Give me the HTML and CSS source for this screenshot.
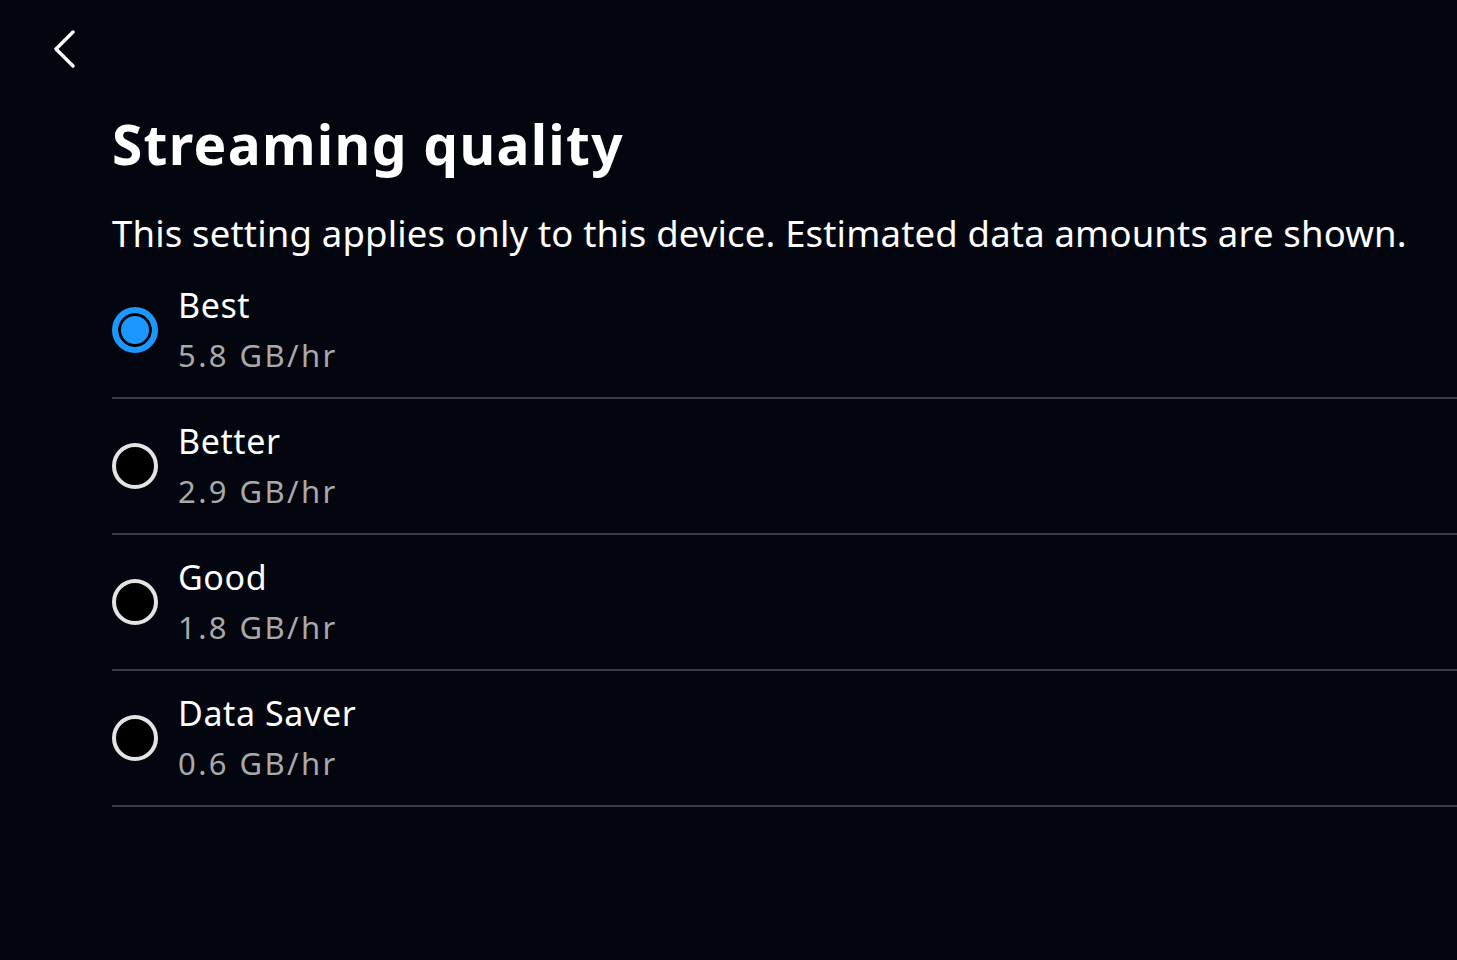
FILE: index.html
```html
<!DOCTYPE html>
<html lang="en">
<head>
<meta charset="utf-8">
<title>Streaming quality</title>
<link rel="stylesheet" href="styles.css">
</head>
<body>
<div class="page">
  <button class="back" aria-label="Back">
    <svg width="40" height="40" viewBox="0 0 40 40"><path d="M33 4 L16 21 L33 38" fill="none" stroke="#fff" stroke-width="3.4" stroke-linecap="round" stroke-linejoin="round"/></svg>
  </button>
  <main class="content">
    <h1 class="title">Streaming quality</h1>
    <p class="desc">This setting applies only to this device. Estimated data amounts are shown.</p>
    <ul class="options">
      <li class="option">
        <span class="radio selected"></span>
        <div class="text"><div class="label">Best</div><div class="sub">5.8 GB/hr</div></div>
      </li>
      <li class="option">
        <span class="radio"></span>
        <div class="text"><div class="label">Better</div><div class="sub">2.9 GB/hr</div></div>
      </li>
      <li class="option">
        <span class="radio"></span>
        <div class="text"><div class="label">Good</div><div class="sub">1.8 GB/hr</div></div>
      </li>
      <li class="option">
        <span class="radio"></span>
        <div class="text"><div class="label">Data Saver</div><div class="sub">0.6 GB/hr</div></div>
      </li>
    </ul>
  </main>
</div>
</body>
</html>
```

FILE: styles.css
```css
html, body {
  margin: 0;
  padding: 0;
  background: #03060f;
  color: #fff;
  font-family: "Noto Sans", "Open Sans", sans-serif;
}
.page {
  width: 1457px;
  height: 960px;
  overflow: hidden;
}
.back {
  display: block;
  margin: 28px 0 0 40px;
  padding: 0;
  width: 40px;
  height: 40px;
  background: none;
  border: 0;
}
.back svg { display: block; }
.content {
  padding-left: 112px;
}
.title {
  margin: 43px 0 0 0;
  font-size: 55px;
  line-height: 66px;
  font-weight: 700;
  letter-spacing: 1.3px;
}
.desc {
  margin: 31px 0 0 0;
  font-size: 36.5px;
  line-height: 50px;
  letter-spacing: 0.17px;
}
.options {
  list-style: none;
  margin: 5px 0 0 0;
  padding: 0;
}
.option {
  display: flex;
  align-items: center;
  height: 134px;
  border-bottom: 2px solid #3a3d45;
}
.radio {
  flex: none;
  box-sizing: border-box;
  width: 46px;
  height: 46px;
  border-radius: 50%;
  border: 4px solid #e4e4e4;
  background: #000;
  margin-right: 20px;
}
.radio.selected {
  border: 6px solid #1a98ff;
  background: #1a98ff;
  box-shadow: inset 0 0 0 3px #000;
}
.label {
  font-size: 34px;
  line-height: 50px;
  letter-spacing: 0.6px;
}
.sub {
  font-size: 31px;
  line-height: 50px;
  color: #a9a9a9;
  letter-spacing: 2.4px;
}
```
